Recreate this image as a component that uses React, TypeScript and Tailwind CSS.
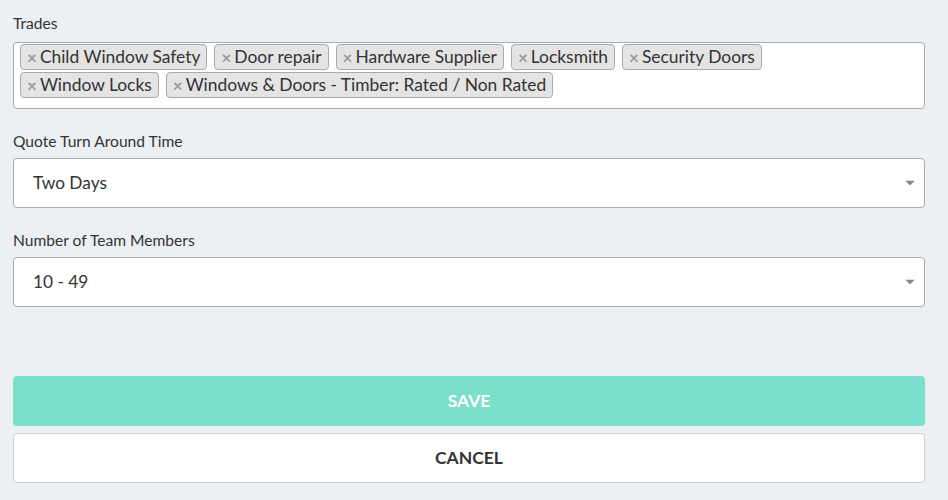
const trades = [
  "Child Window Safety",
  "Door repair",
  "Hardware Supplier",
  "Locksmith",
  "Security Doors",
  "Window Locks",
  "Windows & Doors - Timber: Rated / Non Rated",
];

const Caret = () => (
  <svg width="10" height="5" viewBox="0 0 10 5" className="absolute right-[9px] top-1/2 -translate-y-1/2">
    <path d="M0 0 L10 0 L5 5 Z" fill="#888" />
  </svg>
);

const SelectBox = ({ value }: { value: string }) => (
  <div className="relative h-[50px] bg-white border border-[#aaa] rounded-[4px] flex items-center pl-[19px] text-[17.3px] text-[#333]">
    {value}
    <Caret />
  </div>
);

const App = () => {
  return (
    <div
      className="min-h-screen w-[948px] h-[500px] bg-[#ecf0f3] px-[13px] pt-[13px] text-[#333]"
      style={{ fontFamily: "Lato, 'Open Sans', sans-serif" }}
    >
      {/* Trades */}
      <div className="text-[15.6px] leading-[20px] mb-[9px]">Trades</div>
      <div className="w-[912px] h-[67px] bg-white border border-[#aaa] rounded-[4px] pl-[6px] pr-[40px] pt-[1px] flex flex-wrap content-start gap-x-[7px] gap-y-[2px]">
        {trades.map((t) => (
          <div
            key={t}
            className="h-[26px] flex items-center bg-[#e4e4e4] border border-[#aaa] rounded-[4px] pl-[6px] pr-[6px] text-[17.4px] leading-none text-[#333]"
          >
            <span className="text-[#999] font-bold text-[17px] mr-[3px] leading-none">×</span>
            {t}
          </div>
        ))}
      </div>

      {/* Quote turn around */}
      <div className="text-[15.6px] leading-[20px] mt-[22px] mb-[7px]">Quote Turn Around Time</div>
      <div className="w-[912px]">
        <SelectBox value="Two Days" />
      </div>

      {/* Team members */}
      <div className="text-[15.6px] leading-[20px] mt-[22px] mb-[7px]">Number of Team Members</div>
      <div className="w-[912px]">
        <SelectBox value="10 - 49" />
      </div>

      {/* Buttons */}
      <div className="w-[912px] mt-[69px] flex flex-col gap-[7px]">
        <button className="h-[50px] bg-[#7ae0cc] rounded-[4px] text-white font-bold text-[17.5px]">SAVE</button>
        <button className="h-[50px] bg-white border border-[#ccc] rounded-[4px] text-[#333] font-bold text-[17.5px]">CANCEL</button>
      </div>
    </div>
  );
};

export default App;
